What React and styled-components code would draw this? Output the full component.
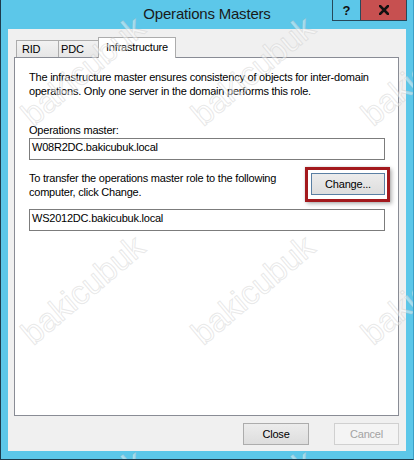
import React from "react";
import styled, { createGlobalStyle } from "styled-components";

const Global = createGlobalStyle`
  html, body { margin: 0; padding: 0; background: #ffffff; }
  body { font-family: "Liberation Sans", Arial, sans-serif; }
  #root { width: 414px; height: 462px; }
`;

const Window = styled.div`
  position: relative;
  width: 414px;
  height: 460px;
  box-sizing: border-box;
  background: #5cc7e9;
  border-left: 1px solid #1d3b4c;
  border-right: 1px solid #3b9fc6;
  border-bottom: 1px solid #1d3b4c;
  padding: 0 7px 8px 7px;
  display: flex;
  flex-direction: column;
  overflow: hidden;
`;

const TitleBar = styled.div`
  height: 29px;
  display: grid;
  grid-template-columns: 1fr auto 1fr;
  align-items: start;
`;

const Title = styled.div`
  grid-column: 2;
  font-size: 15px;
  letter-spacing: -0.2px;
  line-height: 28px;
  color: #1a1a1a;
  white-space: nowrap;
`;

const Controls = styled.div`
  grid-column: 3;
  justify-self: end;
  display: flex;
  margin-right: -1px;
  border: 1px solid #26495b;
  border-top: none;
`;

const CtrlButton = styled.div`
  width: ${(p) => p.$w}px;
  height: 20px;
  display: flex;
  align-items: center;
  justify-content: center;
  background: ${(p) => p.$bg};
  font-weight: bold;
  font-size: 13px;
  color: #111;
  & + & { border-left: 1px solid #26495b; }
`;

const Client = styled.div`
  flex: 1;
  background: #f0f0f0;
  padding: 8px 7px 6px 6px;
  display: flex;
  flex-direction: column;
`;

const TabStrip = styled.div`
  position: relative;
  z-index: 1;
  display: flex;
  align-items: flex-end;
  height: 21px;
  margin-bottom: -1px;
  padding-left: 2px;
`;

const Tab = styled.div`
  box-sizing: border-box;
  width: ${(p) => p.$w}px;
  height: ${(p) => (p.$active ? 21 : 17)}px;
  margin-bottom: ${(p) => (p.$active ? 0 : 1)}px;
  padding-left: ${(p) => p.$pl}px;
  border: 1px solid #acacac;
  border-bottom: none;
  background: ${(p) => (p.$active ? "#ffffff" : "linear-gradient(#f2f2f2, #e6e6e6)")};
  font-size: 11px;
  letter-spacing: -0.2px;
  line-height: ${(p) => (p.$active ? 19 : 16)}px;
  color: #000;
  white-space: nowrap;
  & + & { margin-left: -1px; }
`;

const Panel = styled.div`
  flex: 1;
  background: #ffffff;
  border: 1px solid #898c95;
  padding: 12px 13px 0 14px;
  display: flex;
  flex-direction: column;
`;

const Text = styled.p`
  margin: ${(p) => p.$mt || 0}px 0 0 0;
  font-size: 11px;
  line-height: 14px;
  letter-spacing: -0.22px;
  color: #000;
`;

const Field = styled.div`
  box-sizing: border-box;
  height: 22px;
  margin-top: ${(p) => p.$mt}px;
  border: 1px solid #7c7c7c;
  padding: 0 2px;
  font-size: 11px;
  line-height: 16px;
  letter-spacing: -0.22px;
  color: #000;
  background: #fff;
`;

const TransferRow = styled.div`
  margin-top: 11px;
  display: flex;
  justify-content: space-between;
  align-items: flex-start;
`;

const TransferText = styled(Text)`
  flex: 1;
  max-width: 270px;
`;

const Button = styled.div`
  box-sizing: border-box;
  position: relative;
  width: ${(p) => p.$w}px;
  height: 22px;
  margin-top: ${(p) => p.$mt || 0}px;
  display: flex;
  align-items: center;
  justify-content: center;
  border: 1px solid ${(p) => (p.$disabled ? "#d0d0d0" : p.$focus ? "#5a7fa3" : "#acacac")};
  background: ${(p) => (p.$disabled ? "#f4f4f4" : "linear-gradient(#ececec, #dddddd)")};
  color: ${(p) => (p.$disabled ? "#a3a3a3" : "#000")};
  font-size: 11px;
  letter-spacing: -0.2px;
`;

const Highlight = styled(Button)`
  &::after {
    content: "";
    position: absolute;
    top: -7px;
    left: -7px;
    right: -6px;
    bottom: -8px;
    border: 3px solid #a3191d;
    box-shadow: 2px 2px 4px rgba(0, 0, 0, 0.28), 0 0 2px rgba(0, 0, 0, 0.15);
    pointer-events: none;
  }
`;

const ButtonRow = styled.div`
  margin-top: 7px;
  display: flex;
  justify-content: flex-end;
  gap: 25px;
`;

const Watermark = styled.span`
  position: absolute;
  left: ${(p) => p.$x}px;
  top: ${(p) => p.$y}px;
  transform: translate(-50%, -50%) rotate(-40deg);
  font-family: "Liberation Sans", Arial, sans-serif;
  font-size: 33px;
  color: rgba(255, 255, 255, 0.45);
  -webkit-text-stroke: 1px rgba(190, 190, 190, 0.35);
  pointer-events: none;
  white-space: nowrap;
  z-index: 5;
`;

const marks = [
  [82, 71], [252, 71], [422, 71],
  [82, 290], [252, 290], [422, 290],
  [82, 505], [252, 505], [422, 505],
];

export default function App() {
  return (
    <>
      <Global />
      <Window>
        <TitleBar>
          <Title>Operations Masters</Title>
          <Controls>
            <CtrlButton $w={27} $bg="#5cc7e9">?</CtrlButton>
            <CtrlButton $w={45} $bg="#c75050">
              <svg width="10" height="10" viewBox="0 0 10 10">
                <path d="M1 1 L9 9 M9 1 L1 9" stroke="#111" strokeWidth="2.6" strokeLinecap="square" />
              </svg>
            </CtrlButton>
          </Controls>
        </TitleBar>
        <Client>
          <TabStrip>
            <Tab $w={43} $pl={5}>RID</Tab>
            <Tab $w={41} $pl={2}>PDC</Tab>
            <Tab $w={78} $pl={7} $active>Infrastructure</Tab>
          </TabStrip>
          <Panel>
            <Text>
              The infrastructure master ensures consistency of objects for inter-domain
              operations. Only one server in the domain performs this role.
            </Text>
            <Text $mt={25}>Operations master:</Text>
            <Field $mt={1}>W08R2DC.bakicubuk.local</Field>
            <TransferRow>
              <TransferText>
                To transfer the operations master role to the following computer, click Change.
              </TransferText>
              <Highlight $w={74} $mt={2} $focus>Change...</Highlight>
            </TransferRow>
            <Field $mt={10}>WS2012DC.bakicubuk.local</Field>
          </Panel>
          <ButtonRow>
            <Button $w={66}>Close</Button>
            <Button $w={65} $disabled>Cancel</Button>
          </ButtonRow>
        </Client>
        {marks.map(([x, y], i) => (
          <Watermark key={i} $x={x} $y={y}>bakicubuk</Watermark>
        ))}
      </Window>
    </>
  );
}
